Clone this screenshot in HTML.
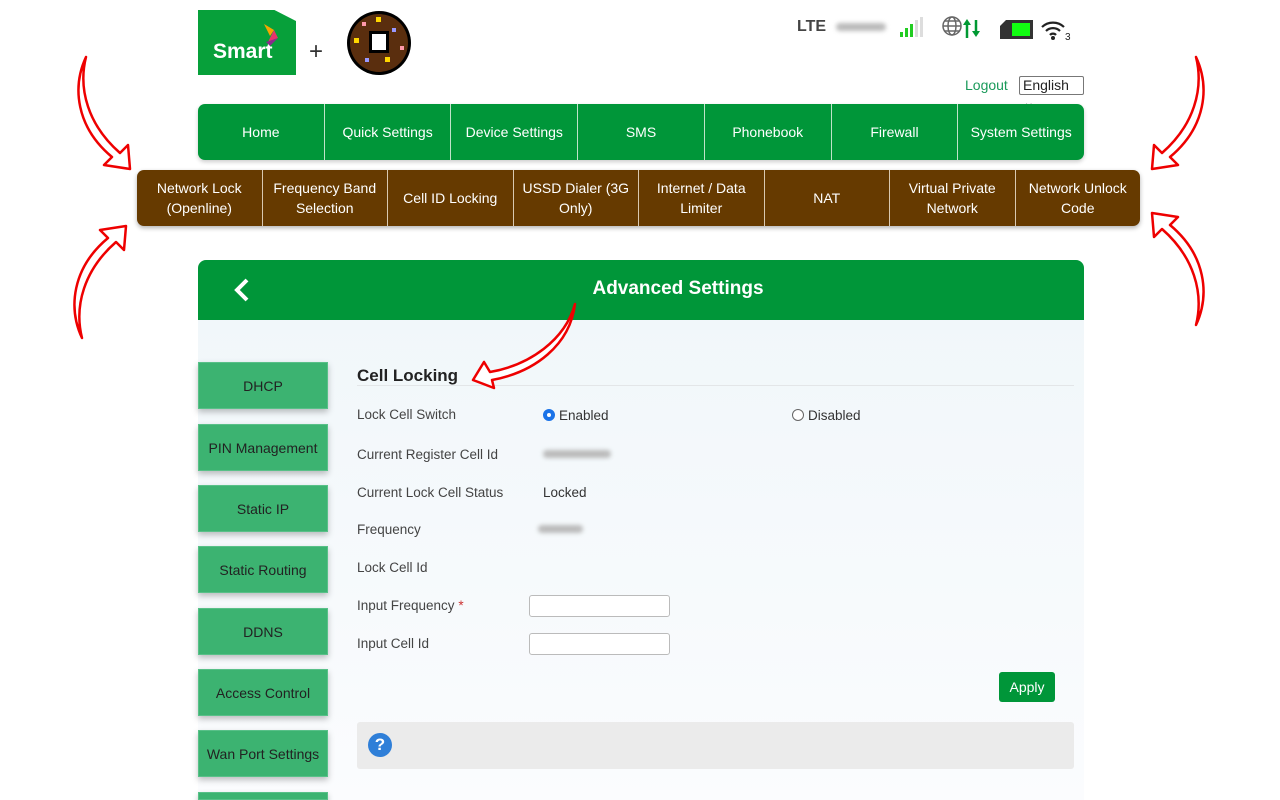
<!DOCTYPE html>
<html style="width:1280px;height:800px;overflow:hidden"><head><meta charset="utf-8">
<style>
*{box-sizing:border-box;margin:0;padding:0}
body{width:1280px;height:800px;overflow:hidden;background:#fff;font-family:"Liberation Sans",Arial,sans-serif;position:relative;color:#333}
.abs{position:absolute}
.nav{position:absolute;left:198px;top:104px;width:886px;height:56px;background:#009639;border-radius:7px;display:flex;box-shadow:0 2px 4px rgba(0,0,0,.2)}
.nav div{flex:1;color:#fff;font-size:14px;display:flex;align-items:center;justify-content:center;border-right:1px solid #bfe3c9;text-align:center}
.nav div:last-child{border:none}
.sub{position:absolute;left:137px;top:170px;width:1003px;height:56px;background:#663a00;border-radius:7px;display:flex;box-shadow:0 2px 5px rgba(0,0,0,.3)}
.sub div{flex:1;color:#fff;font-size:14px;line-height:20px;display:flex;align-items:center;justify-content:center;border-right:1px solid #d9c8b0;text-align:center}
.sub div:last-child{border:none}
.panelh{position:absolute;left:198px;top:260px;width:886px;height:60px;background:#009639;border-radius:8px 8px 0 0;color:#fff;font-weight:bold;font-size:19px;text-align:center;line-height:58px;padding-left:74px}
.panel{position:absolute;left:198px;top:320px;width:886px;height:480px;background:linear-gradient(#f1f7fa,#fbfcfe)}
.sb{position:absolute;left:198px;width:130px;height:47px;background:#3cb371;border:1px solid #58c088;color:#222;font-size:14px;display:flex;align-items:center;justify-content:center;box-shadow:0 3px 6px rgba(0,0,0,.25)}
.lbl{position:absolute;left:357px;font-size:13.5px;color:#444}
.val{position:absolute;left:543px;font-size:13.5px;color:#333}
.inp{position:absolute;left:529px;width:141px;height:22px;border:1px solid #bbb;border-radius:3px;background:#fff}
.radio{display:inline-block;width:12px;height:12px;border-radius:50%;border:1px solid #666;vertical-align:-1px;margin-right:4px;background:#fff}
.blur{position:absolute;height:8px;border-radius:4px;background:#bbb;filter:blur(2px)}
</style></head><body>

<div class="abs" style="left:198px;top:10px;width:98px;height:65px;background:#07a03a;clip-path:polygon(0 0,78% 0,100% 17%,100% 100%,0 100%)"></div>
<div class="abs" style="left:213px;top:40px;color:#fff;font-weight:bold;font-size:21px">Smart</div>
<svg class="abs" style="left:262px;top:24px" width="20" height="24"><polygon points="2,0 12,6 8,12" fill="#f7a600"/><polygon points="12,6 16,14 6,18" fill="#e8336a"/><polygon points="16,14 8,22 4,18" fill="#8a2b8c"/></svg>
<div class="abs" style="left:309px;top:38px;font-size:24px;color:#333">+</div>
<svg class="abs" style="left:345px;top:10px" width="68" height="66" viewBox="0 0 68 66">
<circle cx="34" cy="33" r="32" fill="#000"/><circle cx="34" cy="33" r="29" fill="#5a2e0e"/>
<rect x="24" y="21" width="20" height="22" fill="#000"/><rect x="27" y="24" width="14" height="16" fill="#fff"/>
<rect x="31" y="7" width="5" height="5" fill="#ffd700"/><rect x="17" y="12" width="4" height="4" fill="#f9a"/><rect x="47" y="18" width="4" height="4" fill="#99f"/>
<rect x="9" y="28" width="5" height="5" fill="#ffd700"/><rect x="55" y="36" width="4" height="4" fill="#f9a"/><rect x="20" y="48" width="4" height="4" fill="#99f"/><rect x="40" y="47" width="5" height="5" fill="#ffd700"/>
</svg>

<div class="abs" style="left:797px;top:18px;font-weight:bold;font-size:16px;color:#444">LTE</div>
<div class="blur" style="left:836px;top:23px;width:50px"></div>
<svg class="abs" style="left:899px;top:16px" width="26" height="22"><rect x="1" y="16" width="3" height="5" fill="#2c2"/><rect x="6" y="12" width="3" height="9" fill="#2c2"/><rect x="11" y="8" width="3" height="13" fill="#2c2"/><rect x="16" y="4" width="3" height="17" fill="#ddd"/><rect x="21" y="1" width="3" height="20" fill="#ddd"/></svg>
<svg class="abs" style="left:942px;top:16px" width="42" height="24"><g fill="none" stroke="#666" stroke-width="1.5"><circle cx="10" cy="10" r="9"/><ellipse cx="10" cy="10" rx="4" ry="9"/><line x1="1" y1="10" x2="19" y2="10"/><line x1="2.5" y1="5" x2="17.5" y2="5"/><line x1="2.5" y1="15" x2="17.5" y2="15"/></g><g stroke="#093" stroke-width="2.5" fill="#093"><line x1="25" y1="8" x2="25" y2="22"/><polygon points="21,9 25,3 29,9" stroke-width="0"/><line x1="34" y1="4" x2="34" y2="16"/><polygon points="30,15 34,21 38,15" stroke-width="0"/></g></svg>
<svg class="abs" style="left:999px;top:19px" width="36" height="22"><path d="M7 1H34V20H1V7Z" fill="#333"/><rect x="13" y="4" width="18" height="13" fill="#1f1"/></svg>
<svg class="abs" style="left:1040px;top:18px" width="34" height="24"><g fill="none" stroke="#222" stroke-width="2.2"><path d="M2 9a16 16 0 0 1 22 0"/><path d="M6 13a10 10 0 0 1 14 0"/><path d="M10 17a4 4 0 0 1 6 0"/></g><circle cx="13" cy="20" r="2" fill="#222"/><text x="25" y="22" font-size="10" font-family="Liberation Sans" fill="#222">3</text></svg>

<div class="abs" style="left:965px;top:77px;font-size:14px;color:#1a9a5a">Logout</div>
<div class="abs" style="left:1019px;top:76px;width:65px;height:19px;border:1px solid #777;border-radius:2px;font-size:14px;line-height:17px;padding-left:3px;color:#222">English ⌄</div>

<div class="nav"><div>Home</div><div>Quick Settings</div><div>Device Settings</div><div>SMS</div><div>Phonebook</div><div>Firewall</div><div>System Settings</div></div>
<div class="sub"><div>Network Lock<br>(Openline)</div><div>Frequency Band<br>Selection</div><div>Cell ID Locking</div><div>USSD Dialer (3G<br>Only)</div><div>Internet / Data<br>Limiter</div><div>NAT</div><div>Virtual Private<br>Network</div><div>Network Unlock<br>Code</div></div>

<div class="panelh">Advanced Settings</div>
<svg class="abs" style="left:232px;top:277px" width="20" height="26"><path d="M15 3L5 13L15 23" fill="none" stroke="#fff" stroke-width="4"/></svg>
<div class="panel"></div>

<div class="sb" style="top:362px">DHCP</div>
<div class="sb" style="top:424px">PIN Management</div>
<div class="sb" style="top:485px">Static IP</div>
<div class="sb" style="top:546px">Static Routing</div>
<div class="sb" style="top:608px">DDNS</div>
<div class="sb" style="top:669px">Access Control</div>
<div class="sb" style="top:730px">Wan Port Settings</div>
<div class="sb" style="top:792px;height:8px"></div>

<div class="abs" style="left:357px;top:366px;font-size:17px;font-weight:bold;color:#222">Cell Locking</div>
<div class="abs" style="left:357px;top:385px;width:717px;border-top:1px solid #e3e6e8"></div>
<div class="lbl" style="top:407px">Lock Cell Switch</div>
<div class="abs" style="left:543px;top:408px;font-size:13.5px"><span class="radio" style="border:4px solid #1a73e8"></span>Enabled</div>
<div class="abs" style="left:792px;top:408px;font-size:13.5px"><span class="radio"></span>Disabled</div>
<div class="lbl" style="top:447px">Current Register Cell Id</div>
<div class="blur" style="left:543px;top:450px;width:68px"></div>
<div class="lbl" style="top:485px">Current Lock Cell Status</div>
<div class="val" style="top:485px">Locked</div>
<div class="lbl" style="top:522px">Frequency</div>
<div class="blur" style="left:538px;top:525px;width:45px"></div>
<div class="lbl" style="top:560px">Lock Cell Id</div>
<div class="lbl" style="top:598px">Input Frequency <span style="color:#c33">*</span></div>
<div class="inp" style="top:595px"></div>
<div class="lbl" style="top:636px">Input Cell Id</div>
<div class="inp" style="top:633px"></div>
<div class="abs" style="left:999px;top:672px;width:56px;height:30px;background:#009639;border-radius:3px;color:#fff;font-size:14px;text-align:center;line-height:30px">Apply</div>
<div class="abs" style="left:357px;top:722px;width:717px;height:47px;background:#ebebeb;border-radius:3px"></div>
<div class="abs" style="left:368px;top:733px;width:24px;height:24px;border-radius:50%;background:#2f7fd8;color:#fff;font-weight:bold;font-size:17px;text-align:center;line-height:24px">?</div>

<svg class="abs" style="left:0;top:0" width="1280" height="800">
<defs><g id="arr" fill="#fff" stroke="#e00" stroke-width="2.5" stroke-linejoin="round">
<path d="M0 0 C-14 30,-10 70,26 100 L18 108 L44 112 L42 88 L34 96 C2 68,-8 32,0 0Z"/>
</g></defs>
<use href="#arr" transform="translate(86,57)"/>
<use href="#arr" transform="translate(82,338) scale(1,-1)"/>
<use href="#arr" transform="translate(1196,57) scale(-1,1)"/>
<use href="#arr" transform="translate(1196,325) scale(-1,-1)"/>
<path d="M575 304 C565 340,530 365,490 372 L484 362 L473 380 L494 388 L492 380 C535 372,570 345,575 304Z" fill="#fff" stroke="#e00" stroke-width="2.5" stroke-linejoin="round"/>
</svg>
</body></html>
